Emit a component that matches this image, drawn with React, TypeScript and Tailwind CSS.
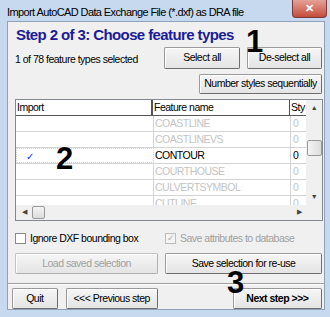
const font = { fontFamily: '"Liberation Sans", Arial, sans-serif' };

function Btn({ children, className = "", disabled = false, bold = false }: { children: React.ReactNode; className?: string; disabled?: boolean; bold?: boolean }) {
  return (
    <div
      className={`flex items-center justify-center whitespace-nowrap rounded-[2px] border border-[#9a9a9a] border-b-[#6d6d6d] border-r-[#6d6d6d] bg-gradient-to-b from-[#f6f6f6] to-[#e4e4e4] shadow-[inset_1px_1px_0_#ffffff] ${disabled ? "text-[#a0a0a0] border-[#c2c2c2] border-b-[#b0b0b0] border-r-[#b0b0b0]" : "text-black"} ${bold ? "font-bold" : ""} ${className}`}
    >
      {children}
    </div>
  );
}

const rows = [
  { name: "COASTLINE", on: false },
  { name: "COASTLINEVS", on: false },
  { name: "CONTOUR", on: true },
  { name: "COURTHOUSE", on: false },
  { name: "CULVERTSYMBOL", on: false },
  { name: "CUTLINE", on: false },
];

export default function App() {
  return (
    <div className="relative w-[330px] h-[317px] overflow-hidden bg-[#c6d9ee] text-[10.5px] tracking-[-0.5px]" style={font}>
      {/* title bar */}
      <div className="flex h-[21px] items-start justify-between">
        <div className="pl-[7px] pt-[5px] text-[11px] leading-[14px] tracking-[-0.6px] text-black whitespace-nowrap">
          Import AutoCAD Data Exchange File (*.dxf) as DRA file
        </div>
        <div className="mr-[3px] flex h-[18px] w-[35px] items-center justify-center rounded-b-[4px] border border-t-0 border-[#7a3a3a] bg-gradient-to-b from-[#e3a195] to-[#c44a3c] text-[11px] font-bold tracking-normal text-white">
          ✕
        </div>
      </div>

      {/* client area */}
      <div className="ml-[7px] mr-[5px] h-[289px] border border-[#8da2b8] bg-[#f0f0f0] pl-[7px] pr-[2px]">
        <div className="pl-[1px] pt-[4px] text-[15px] font-bold leading-[17px] tracking-[-0.6px] text-[#1c1c9a] whitespace-nowrap">
          Step 2 of 3: Choose feature types
        </div>

        <div className="mt-[4px] flex h-[22px] items-center">
          <div className="w-[149px] pt-[4px] whitespace-nowrap">1 of 78 feature types selected</div>
          <Btn className="h-[22px] w-[76px]">Select all</Btn>
          <Btn className="ml-[7px] h-[22px] w-[75px]">De-select all</Btn>
        </div>

        <div className="mt-[5px] flex justify-end">
          <Btn className="h-[20px] w-[123px]">Number styles sequentially</Btn>
        </div>

        {/* grid */}
        <div className="mt-[5px] h-[122px] w-[308px] border border-[#828790] bg-white">
          <div className="flex h-[105px]">
            <div className="w-[291px] overflow-hidden">
              <div className="flex h-[16px] border-b border-[#555555] leading-[15px]">
                <div className="w-[137px] shrink-0 border-r-2 border-[#555555] pl-[1px]">Import</div>
                <div className="w-[137px] shrink-0 border-r border-[#555555] pl-[1px]">Feature name</div>
                <div className="w-[20px] shrink-0 pl-[1px]">Sty</div>
              </div>
              {rows.map((r) => (
                <div key={r.name} className="flex h-[16px] border-b border-[#d4d4d4] leading-[15px]">
                  <div
                    className={`w-[138px] shrink-0 border-r border-[#d4d4d4] pl-[9px] ${r.on ? "border border-dotted border-[#444444]" : ""}`}
                  >
                    {r.on && <span className="text-[10px] text-[#2020ff]">✓</span>}
                  </div>
                  <div className={`w-[137px] shrink-0 border-r border-[#d4d4d4] pl-[1px] ${r.on ? "text-black" : "text-[#c4c4c4]"}`}>{r.name}</div>
                  <div className={`w-[20px] shrink-0 pl-[2px] ${r.on ? "text-black" : "text-[#c4c4c4]"}`}>0</div>
                </div>
              ))}
            </div>
            {/* vertical scrollbar */}
            <div className="flex w-[16px] flex-col items-center bg-[#f0f0f0]">
              <div className="flex h-[16px] items-center text-[7px] text-[#444444]">▲</div>
              <div className="mt-[24px] h-[16px] w-[15px] rounded-[2px] border border-[#9a9a9a] bg-gradient-to-r from-[#f4f4f4] to-[#dcdcdc]" />
              <div className="mt-auto flex h-[16px] items-center text-[7px] text-[#444444]">▼</div>
            </div>
          </div>
          {/* horizontal scrollbar */}
          <div className="flex h-[15px] items-center bg-[#f0f0f0]">
            <div className="w-[16px] text-center text-[7px] text-[#444444]">◀</div>
            <div className="h-[13px] w-[13px] rounded-[2px] border border-[#9a9a9a] bg-gradient-to-b from-[#f4f4f4] to-[#dcdcdc]" />
            <div className="ml-auto mr-[16px] w-[14px] text-center text-[7px] text-[#444444]">▶</div>
          </div>
        </div>

        {/* checkboxes */}
        <div className="mt-[12px] flex h-[11px] items-center">
          <div className="flex w-[150px] items-center">
            <div className="h-[11px] w-[11px] border border-[#8a8a8a] bg-white" />
            <span className="ml-[4px]">Ignore DXF bounding box</span>
          </div>
          <div className="flex items-center text-[#a0a0a0]">
            <div className="flex h-[11px] w-[11px] items-center justify-center border border-[#bcbcbc] bg-[#f4f4f4] text-[9px] leading-none text-[#a8a8a8]">✓</div>
            <span className="ml-[4px]">Save attributes to database</span>
          </div>
        </div>

        <div className="mt-[9px] flex">
          <Btn disabled className="h-[21px] w-[143px]">Load saved selection</Btn>
          <Btn className="ml-[7px] h-[21px] w-[157px]">Save selection for re-use</Btn>
        </div>

        <div className="-ml-[7px] -mr-[2px] mt-[9px] border-t border-[#a0a0a0] border-b border-b-white" />

        <div className="mt-[3px] -ml-[3px] flex">
          <Btn className="h-[21px] w-[46px]">Quit</Btn>
          <Btn className="ml-[8px] h-[21px] w-[93px]">&lt;&lt;&lt; Previous step</Btn>
          <Btn bold className="ml-[75px] h-[21px] w-[90px]">Next step &gt;&gt;&gt;</Btn>
        </div>
      </div>

      {/* annotation numbers */}
      <div className="absolute left-[246px] top-[26px] text-[31px] font-bold leading-none tracking-normal text-black">1</div>
      <div className="absolute left-[56px] top-[143px] text-[31px] font-bold leading-none tracking-normal text-black">2</div>
      <div className="absolute left-[227px] top-[267px] text-[31px] font-bold leading-none tracking-normal text-black">3</div>
    </div>
  );
}
